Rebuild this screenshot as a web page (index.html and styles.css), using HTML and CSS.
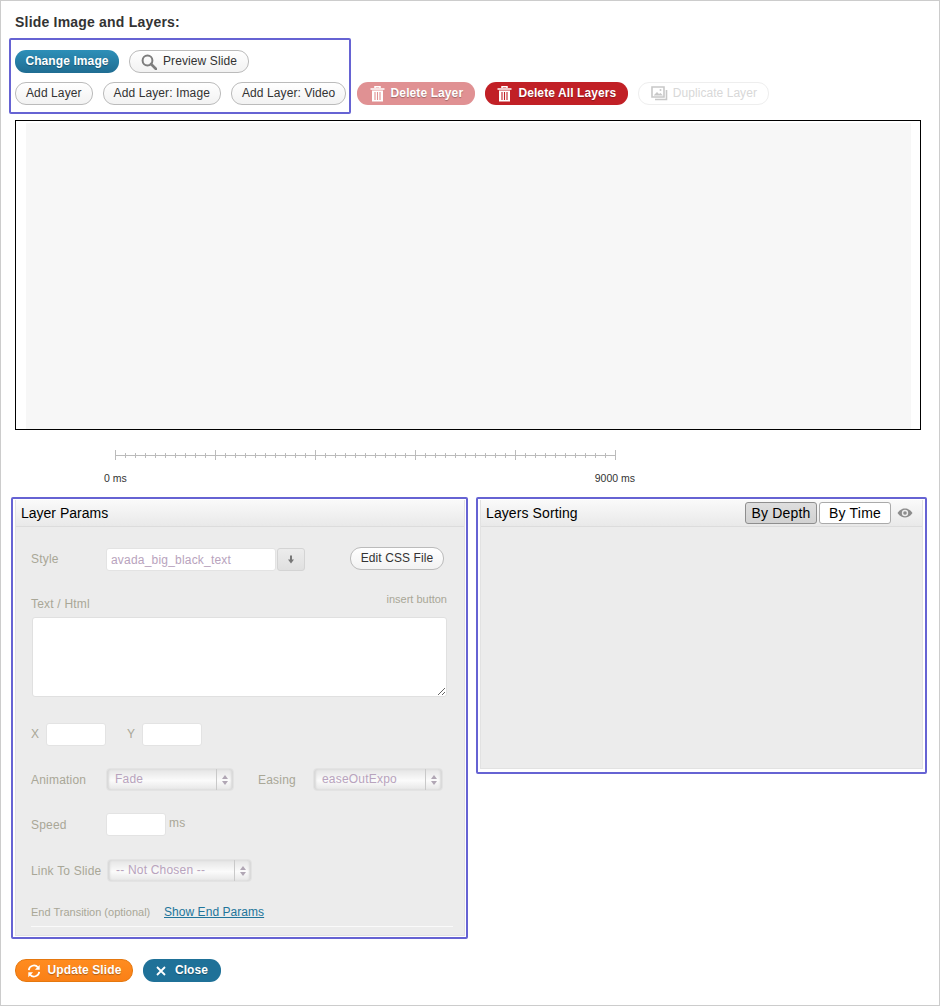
FILE: index.html
```html
<!DOCTYPE html>
<html lang="en">
  <head>
    <meta charset="UTF-8" />
    <title>Slide Image and Layers</title>
    <link rel="stylesheet" href="styles.css">
  </head>

  <body>
    <div class="page">
      <h3 class="page-title">Slide Image and Layers:</h3>

      <div class="toolbar">
        <div class="mark mark-toolbar"></div>
        <div class="toolbar-row">
          <a class="btn btn-blue btn-change">Change Image</a>
          <a class="btn btn-light btn-preview">
            <svg class="icon-search" viewBox="0 0 16 16" width="16" height="16"><circle cx="6.5" cy="6.5" r="4.9" fill="none" stroke="#7d7d7d" stroke-width="2"/><path d="M10 10l5 5" stroke="#7d7d7d" stroke-width="2.6" stroke-linecap="round"/></svg>
            Preview Slide
          </a>
        </div>
        <div class="toolbar-row">
          <a class="btn btn-light btn-add">Add Layer</a>
          <a class="btn btn-light btn-add">Add Layer: Image</a>
          <a class="btn btn-light btn-add">Add Layer: Video</a>
          <a class="btn btn-red btn-faded">
            <svg class="icon-trash" viewBox="0 0 14 16" width="15" height="16"><path d="M4.500 2V0.800h5V2M0 3h14" stroke="#fff" stroke-width="1.5" fill="none"/><path d="M1.500 4.500h11V15.500H1.500z" fill="#fff"/><path d="M4.500 6v8M7 6v8M9.500 6v8" stroke="#e09193" stroke-width="1.1"/></svg>
            Delete Layer
          </a>
          <a class="btn btn-red">
            <svg class="icon-trash" viewBox="0 0 14 16" width="15" height="16"><path d="M4.500 2V0.800h5V2M0 3h14" stroke="#fff" stroke-width="1.5" fill="none"/><path d="M1.500 4.500h11V15.500H1.500z" fill="#fff"/><path d="M4.500 6v8M7 6v8M9.500 6v8" stroke="#c12026" stroke-width="1.1"/></svg>
            Delete All Layers
          </a>
          <a class="btn btn-disabled">
            <svg class="icon-dup" viewBox="0 0 17 15" width="17" height="15"><path d="M1 1h12v10H1z" fill="none" stroke="#c8c8c8" stroke-width="1.6"/><path d="M3 9l3-3 2 2 1.5-1L12 9.500H3z" fill="#c8c8c8"/><circle cx="9.500" cy="4" r="1" fill="#c8c8c8"/><path d="M15.500 4v9.500H4" fill="none" stroke="#c8c8c8" stroke-width="1.6"/></svg>
            Duplicate Layer
          </a>
        </div>
      </div>

      <div class="canvas"><div class="canvas-inner"></div></div>

      <div class="timeline">
        <div class="ruler"></div>
        <div class="ruler-labels">
          <span>0 ms</span>
          <span>9000 ms</span>
        </div>
      </div>

      <div class="panels">
        <div class="mark-panel mark-params">
          <div class="panel panel-params">
            <div class="panel-head">Layer Params</div>
            <div class="panel-body">
              <div class="form-row row-style">
                <label class="field-label label-wide">Style</label>
                <input class="text-input input-style" type="text" value="avada_big_black_text">
                <span class="arrow-btn">
                  <svg viewBox="0 0 8 9" width="8" height="9"><path d="M4 0.500v5" stroke="#777" stroke-width="2"/><path d="M1 4.500h6L4 8.500z" fill="#777"/></svg>
                </span>
                <a class="btn btn-light btn-css">Edit CSS File</a>
              </div>
              <div class="text-head">
                <label class="field-label">Text / Html</label>
                <span class="insert-link">insert button</span>
              </div>
              <textarea class="text-area"></textarea>
              <div class="form-row row-xy">
                <label class="field-label label-x">X</label>
                <input class="text-input input-small" type="text">
                <label class="field-label label-y">Y</label>
                <input class="text-input input-small" type="text">
              </div>
              <div class="form-row row-anim">
                <label class="field-label label-wide">Animation</label>
                <div class="select select-anim"><span>Fade</span><i class="stepper"></i></div>
                <label class="field-label label-easing">Easing</label>
                <div class="select select-easing"><span>easeOutExpo</span><i class="stepper"></i></div>
              </div>
              <div class="form-row row-speed">
                <label class="field-label label-wide">Speed</label>
                <input class="text-input input-small" type="text">
                <span class="field-label unit">ms</span>
              </div>
              <div class="form-row row-link">
                <label class="field-label label-link">Link To Slide</label>
                <div class="select select-link"><span>-- Not Chosen --</span><i class="stepper"></i></div>
              </div>
              <div class="end-row">
                <span class="end-label">End Transition (optional)</span>
                <a class="end-link">Show End Params</a>
              </div>
              <div class="divider"></div>
            </div>
          </div>
        </div>

        <div class="mark-panel mark-sorting">
          <div class="panel panel-sorting">
            <div class="panel-head head-sorting">
              <span class="head-title">Layers Sorting</span>
              <a class="tab tab-active">By Depth</a>
              <a class="tab">By Time</a>
              <svg class="icon-eye" viewBox="0 0 16 10" width="16" height="10"><path d="M0.500 5C3 1.500 5.500 0.500 8 0.500S13 1.500 15.500 5C13 8.500 10.500 9.500 8 9.500S3 8.500 0.500 5z" fill="#8c8c8c"/><circle cx="8" cy="5" r="3.200" fill="#ececec"/><circle cx="8" cy="5" r="1.800" fill="#8c8c8c"/></svg>
            </div>
          </div>
        </div>
      </div>

      <div class="footer-buttons">
        <a class="btn btn-orange">
          <svg class="icon-sync" viewBox="0 0 16 16" width="14" height="14"><path d="M2 7a6 6 0 0 1 10.500-3.200" fill="none" stroke="#fff" stroke-width="2"/><path d="M14.500 1v5.500H9z" fill="#fff"/><path d="M14 9a6 6 0 0 1-10.500 3.200" fill="none" stroke="#fff" stroke-width="2"/><path d="M1.500 15V9.500H7z" fill="#fff"/></svg>
          Update Slide
        </a>
        <a class="btn btn-teal">
          <svg class="icon-x" viewBox="0 0 10 10" width="10" height="10"><path d="M1 1l8 8M9 1l-8 8" stroke="#fff" stroke-width="1.800"/></svg>
          Close
        </a>
      </div>
    </div>
  </body>
</html>
```

FILE: styles.css
```css
* {
  box-sizing: border-box;
}

body {
  margin: 0;
  background: #fff;
  font-family: "Liberation Sans", Arial, sans-serif;
}

.page {
  width: 940px;
  height: 1006px;
  border: 1px solid #ccc;
  padding: 14px 14px 0;
}

.page-title {
  margin: 0;
  font-size: 14px;
  line-height: 14px;
  font-weight: bold;
  letter-spacing: 0.2px;
  color: #333;
}

/* Toolbar */
.toolbar {
  position: relative;
  margin-top: 21px;
}

.toolbar-row {
  display: flex;
  gap: 10px;
  margin-bottom: 9px;
}

.mark-toolbar {
  position: absolute;
  left: -6px;
  top: -12px;
  width: 342px;
  height: 76px;
  border: 2px solid #6663d3;
  border-radius: 2px;
}

/* Buttons */
.btn {
  display: flex;
  align-items: center;
  justify-content: center;
  height: 23px;
  padding-bottom: 1px;
  border-radius: 11px;
  font-size: 12px;
  letter-spacing: 0.1px;
  white-space: nowrap;
  text-decoration: none;
}

.btn svg {
  flex-shrink: 0;
  margin-top: 1px;
}

.btn-light {
  border: 1px solid #bbb;
  color: #333;
  background: linear-gradient(#fff, #f2f2f2);
}

.btn-add {
  padding-left: 10px;
  padding-right: 10px;
}

.btn-preview {
  width: 120px;
  gap: 6px;
}

.btn-css {
  width: 94px;
  margin-left: 45px;
  margin-top: -2px;
}

.btn-blue,
.btn-red,
.btn-orange,
.btn-teal {
  color: #fff;
  font-weight: bold;
  text-shadow: 0 1px 1px rgba(0, 0, 0, 0.3);
}

.btn-blue {
  width: 104px;
  background: linear-gradient(#2d8fb8, #1f6d92);
}

.btn-red {
  width: 143px;
  gap: 6px;
  background: #c12026;
}

.btn-faded {
  width: 118px;
  margin-left: 1px;
  background: #e09193;
}

.btn-disabled {
  width: 131px;
  gap: 5px;
  border: 1px solid #eee;
  letter-spacing: 0.05px;
  color: #d8d8d8;
}

.btn-orange {
  width: 118px;
  gap: 7px;
  border: 1px solid #e5780f;
  background: linear-gradient(#ff8c20, #fa8016);
}

.btn-teal {
  width: 78px;
  gap: 9px;
  background: #1f7198;
}

/* Canvas */
.canvas {
  width: 906px;
  height: 310px;
  margin-top: 15px;
  padding: 2px 9px 0 10px;
  border: 1px solid #000;
}

.canvas-inner {
  height: 100%;
  background: #f7f7f7;
}

/* Timeline */
.timeline {
  height: 47px;
  padding-left: 100px;
}

.ruler {
  width: 501px;
  height: 10px;
  margin-top: 20px;
  background:
    repeating-linear-gradient(90deg, #bbb 0 1px, transparent 1px 100px),
    linear-gradient(#bbb, #bbb) 0 5px / 100% 1px no-repeat,
    repeating-linear-gradient(90deg, #bbb 0 1px, transparent 1px 10px) 0 3px / 100% 5px no-repeat;
}

.ruler-labels {
  display: flex;
  justify-content: space-between;
  width: 531px;
  margin-top: 12px;
  margin-left: -11px;
  font-size: 10.500px;
  line-height: 12px;
  color: #333;
}

/* Panels */
.panels {
  display: flex;
  align-items: flex-start;
  gap: 8px;
  margin-left: -4px;
}

.mark-panel {
  flex-shrink: 0;
  border: 2px solid #6663d3;
  border-radius: 2px;
}

.mark-params {
  width: 457px;
  height: 442px;
  padding: 1px 1px 1px 2px;
}

.mark-sorting {
  width: 451px;
  height: 277px;
  padding: 1px 2px 3px 2px;
}

.panel {
  height: 100%;
  background: #ececec;
  border: 1px solid #e2e2e2;
  border-top: none;
}

.panel-head {
  height: 27px;
  padding-left: 5px;
  border-bottom: 1px solid #dcdcdc;
  background: linear-gradient(#fafafa, #e9e9e9);
  font-size: 14px;
  line-height: 26px;
  color: #000;
}

.head-sorting {
  display: flex;
  align-items: center;
  padding-bottom: 1px;
}

.head-title {
  flex: 1;
  letter-spacing: 0.1px;
}

.tab {
  width: 72px;
  height: 22px;
  margin-left: 2px;
  border: 1px solid #aaa;
  border-radius: 3px;
  background: #fff;
  text-align: center;
  letter-spacing: 0.2px;
  line-height: 21px;
}

.tab-active {
  margin-left: 0;
  background: linear-gradient(#dedede, #d2d2d2);
  border-color: #8e8e8e;
}

.icon-eye {
  margin: 0 9px 0 6px;
}

.panel-body {
  padding: 21px 11px 0 15px;
}

/* Form rows */
.form-row {
  display: flex;
  align-items: center;
  height: 23px;
}

.field-label {
  font-size: 12px;
  letter-spacing: 0.2px;
  color: #a9a797;
}

.row-style .field-label,
.row-xy .field-label {
  margin-top: -2px;
}

.label-wide {
  width: 75px;
}

.text-input {
  height: 23px;
  padding: 0 4px;
  border: 1px solid #e3e3e3;
  border-radius: 3px;
  background: #fff;
  font-family: inherit;
  font-size: 12px;
  letter-spacing: 0.2px;
  color: #b8a3bd;
}

.input-style {
  width: 170px;
}

.input-small {
  width: 60px;
}

.arrow-btn {
  display: flex;
  align-items: center;
  justify-content: center;
  width: 28px;
  height: 23px;
  margin-left: 1px;
  border: 1px solid #d4d4d4;
  border-radius: 3px;
  background: linear-gradient(#ececec, #e0e0e0);
}

.text-head {
  display: flex;
  justify-content: space-between;
  align-items: flex-start;
  height: 24px;
  margin-top: 22px;
  padding-right: 6px;
}

.text-head .field-label {
  margin-top: 4px;
}

.insert-link {
  font-size: 11px;
  line-height: 12px;
  color: #a9a797;
}

.text-area {
  display: block;
  width: 415px;
  height: 80px;
  margin: 0 0 0 1px;
  border: 1px solid #e0e0e0;
  border-radius: 3px;
  background: #fff;
}

.row-xy {
  margin-top: 26px;
}

.label-x {
  width: 15px;
}

.label-y {
  width: 15px;
  margin-left: 21px;
}

.row-anim {
  margin-top: 22px;
}

.select {
  position: relative;
  height: 23px;
  padding: 0 0 0 8px;
  border: 1px solid #e3e3e3;
  border-radius: 4px;
  background: linear-gradient(#e4e4e4, #fbfbfb 55%, #e6e6e6);
  box-shadow: inset 2px 0 2px #d8d8d8, inset -2px 0 2px #d8d8d8;
  font-size: 12px;
  letter-spacing: 0.2px;
  line-height: 21px;
  color: #b8a3bd;
}

.stepper {
  position: absolute;
  top: 0;
  right: 0;
  width: 17px;
  height: 21px;
  border-left: 1px solid #c9c9c9;
}

/* up and down carets of the select */
.stepper::before,
.stepper::after {
  content: "";
  position: absolute;
  left: 5px;
  border-left: 3px solid transparent;
  border-right: 3px solid transparent;
}

.stepper::before {
  top: 6px;
  border-bottom: 4px solid #b0a6b4;
}

.stepper::after {
  top: 12px;
  border-top: 4px solid #b0a6b4;
}

.select-anim {
  width: 128px;
}

.label-easing {
  width: 55px;
  margin-left: 24px;
}

.select-easing {
  width: 130px;
}

.row-speed {
  margin-top: 22px;
}

.unit {
  margin-left: 3px;
  margin-top: -3px;
}

.row-link {
  margin-top: 23px;
}

.label-link {
  width: 76px;
}

.select-link {
  width: 145px;
}

.end-row {
  display: flex;
  align-items: center;
  height: 14px;
  margin-top: 23px;
}

.end-label {
  width: 133px;
  font-size: 11px;
  color: #a9a797;
}

.end-link {
  font-size: 12px;
  letter-spacing: 0.05px;
  color: #21759b;
  text-decoration: underline;
}

.divider {
  height: 1px;
  margin-top: 7px;
  background: #fafafa;
}

/* Bottom buttons */
.footer-buttons {
  display: flex;
  gap: 10px;
  margin-top: 20px;
}
```
